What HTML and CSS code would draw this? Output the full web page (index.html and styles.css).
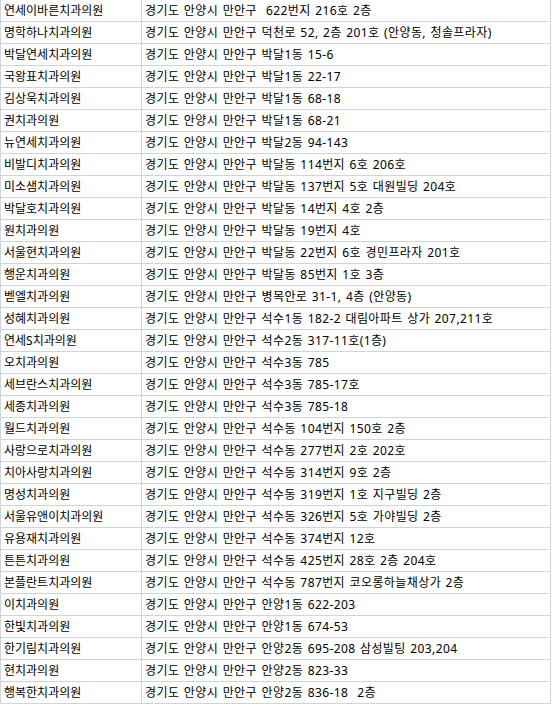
FILE: index.html
```html
<!DOCTYPE html>
<html lang="ko">
<head>
<meta charset="utf-8">
<link rel="stylesheet" href="styles.css">
</head>
<body>
<div class="sheet">
<div class="row"><div class="name">연세이바른치과의원</div><div class="addr">경기도 안양시 만안구&nbsp; 622번지 216호 2층</div></div>
<div class="row"><div class="name">명학하나치과의원</div><div class="addr">경기도 안양시 만안구 덕천로 52, 2층 201호 (안양동, 청솔프라자)</div></div>
<div class="row"><div class="name">박달연세치과의원</div><div class="addr">경기도 안양시 만안구 박달1동 15-6</div></div>
<div class="row"><div class="name">국왕표치과의원</div><div class="addr">경기도 안양시 만안구 박달1동 22-17</div></div>
<div class="row"><div class="name">김상욱치과의원</div><div class="addr">경기도 안양시 만안구 박달1동 68-18</div></div>
<div class="row"><div class="name">권치과의원</div><div class="addr">경기도 안양시 만안구 박달1동 68-21</div></div>
<div class="row"><div class="name">뉴연세치과의원</div><div class="addr">경기도 안양시 만안구 박달2동 94-143</div></div>
<div class="row"><div class="name">비발디치과의원</div><div class="addr">경기도 안양시 만안구 박달동 114번지 6호 206호</div></div>
<div class="row"><div class="name">미소샘치과의원</div><div class="addr">경기도 안양시 만안구 박달동 137번지 5호 대원빌딩 204호</div></div>
<div class="row"><div class="name">박달호치과의원</div><div class="addr">경기도 안양시 만안구 박달동 14번지 4호 2층</div></div>
<div class="row"><div class="name">원치과의원</div><div class="addr">경기도 안양시 만안구 박달동 19번지 4호</div></div>
<div class="row"><div class="name">서울현치과의원</div><div class="addr">경기도 안양시 만안구 박달동 22번지 6호 경민프라자 201호</div></div>
<div class="row"><div class="name">행운치과의원</div><div class="addr">경기도 안양시 만안구 박달동 85번지 1호 3층</div></div>
<div class="row"><div class="name">벧엘치과의원</div><div class="addr">경기도 안양시 만안구 병목안로 31-1, 4층 (안양동)</div></div>
<div class="row"><div class="name">성혜치과의원</div><div class="addr">경기도 안양시 만안구 석수1동 182-2 대림아파트 상가 207,211호</div></div>
<div class="row"><div class="name">연세S치과의원</div><div class="addr">경기도 안양시 만안구 석수2동 317-11호(1층)</div></div>
<div class="row"><div class="name">오치과의원</div><div class="addr">경기도 안양시 만안구 석수3동 785</div></div>
<div class="row"><div class="name">세브란스치과의원</div><div class="addr">경기도 안양시 만안구 석수3동 785-17호</div></div>
<div class="row"><div class="name">세종치과의원</div><div class="addr">경기도 안양시 만안구 석수3동 785-18</div></div>
<div class="row"><div class="name">월드치과의원</div><div class="addr">경기도 안양시 만안구 석수동 104번지 150호 2층</div></div>
<div class="row"><div class="name">사랑으로치과의원</div><div class="addr">경기도 안양시 만안구 석수동 277번지 2호 202호</div></div>
<div class="row"><div class="name">치아사랑치과의원</div><div class="addr">경기도 안양시 만안구 석수동 314번지 9호 2층</div></div>
<div class="row"><div class="name">명성치과의원</div><div class="addr">경기도 안양시 만안구 석수동 319번지 1호 지구빌딩 2층</div></div>
<div class="row"><div class="name">서울유앤이치과의원</div><div class="addr">경기도 안양시 만안구 석수동 326번지 5호 가야빌딩 2층</div></div>
<div class="row"><div class="name">유용재치과의원</div><div class="addr">경기도 안양시 만안구 석수동 374번지 12호</div></div>
<div class="row"><div class="name">튼튼치과의원</div><div class="addr">경기도 안양시 만안구 석수동 425번지 28호 2층 204호</div></div>
<div class="row"><div class="name">본플란트치과의원</div><div class="addr">경기도 안양시 만안구 석수동 787번지 코오롱하늘채상가 2층</div></div>
<div class="row"><div class="name">이치과의원</div><div class="addr">경기도 안양시 만안구 안양1동 622-203</div></div>
<div class="row"><div class="name">한빛치과의원</div><div class="addr">경기도 안양시 만안구 안양1동 674-53</div></div>
<div class="row"><div class="name">한기림치과의원</div><div class="addr">경기도 안양시 만안구 안양2동 695-208 삼성빌팅 203,204</div></div>
<div class="row"><div class="name">현치과의원</div><div class="addr">경기도 안양시 만안구 안양2동 823-33</div></div>
<div class="row"><div class="name">행복한치과의원</div><div class="addr">경기도 안양시 만안구 안양2동 836-18&nbsp; 2층</div></div>
</div>
</body>
</html>
```
FILE: styles.css
```css
html, body {
  margin: 0;
  padding: 0;
  background: #ffffff;
}
.sheet {
  width: 551px;
  border-right: 1px solid #d0d4dc;
  box-sizing: border-box;
  font-family: "Noto Sans", "Noto Sans CJK KR", sans-serif;
  font-size: 12px;
  color: #000;
}
.row {
  display: flex;
  height: 22px;
  box-sizing: border-box;
  border-bottom: 1px solid #d0d4dc;
}
.name, .addr {
  border-left: 1px solid #d0d4dc;
  padding-left: 3px;
  line-height: 21px;
  white-space: nowrap;
  overflow: hidden;
}
.name {
  width: 141px;
  box-sizing: border-box;
  flex: none;
}
.addr {
  flex: 1;
  word-spacing: 1px;
  letter-spacing: 0.4px;
}
```
